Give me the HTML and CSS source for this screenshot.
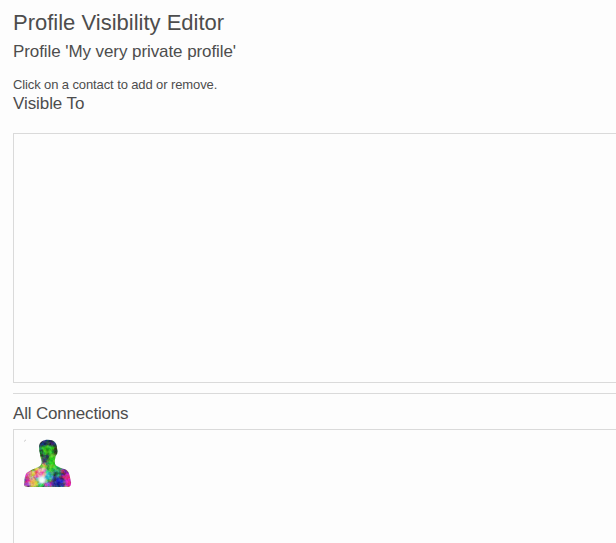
FILE: index.html
```html
<!DOCTYPE html>
<html lang="en">
<head>
<meta charset="utf-8">
<title>Profile Visibility Editor</title>
<link rel="stylesheet" href="styles.css">
</head>
<body>
<main class="editor">
  <h1 class="title">Profile Visibility Editor</h1>
  <h3 class="profile-name">Profile 'My very private profile'</h3>
  <p class="hint">Click on a contact to add or remove.</p>
  <h3 class="section-title">Visible To</h3>
  <div class="contacts visible-contacts"></div>
  <hr class="divider">
  <h3 class="section-title connections-title">All Connections</h3>
  <div class="contacts all-contacts">
    <svg class="avatar" viewBox="0 0 48 48" role="img" aria-label="Contact">
      <defs>
        <clipPath id="person"><path d="M15 8C15 3 19 .7 24 .7C30 .7 33 4 33 9L33.6 12Q33.8 15 31.8 17Q31 20 30.8 22Q30.6 25 32 26.5Q36 29 41 30.3Q44.5 31.5 45.5 36L47 43Q47.5 48 44 48H3Q-.5 48 .2 44Q.4 37 2.5 34Q6 31 12 29Q16.8 27 17.5 24.5Q18 22 17 20Q16 17 16 15Q15 12 15 8Z"/></clipPath>
        <filter id="soft" x="-20%" y="-20%" width="140%" height="140%"><feGaussianBlur stdDeviation="1.1"/></filter>
        <filter id="speckle" x="0" y="0" width="100%" height="100%" color-interpolation-filters="sRGB">
          <feTurbulence type="fractalNoise" baseFrequency=".27" numOctaves="3" seed="8"/>
          <feColorMatrix values="2.2 0 0 0 -.6  0 2.2 0 0 -.6  0 0 2.2 0 -.6  0 0 0 0 1"/>
        </filter>
      </defs>
      <g clip-path="url(#person)">
        <rect width="48" height="48" fill="#40a83c"/>
        <g filter="url(#soft)">
          <path fill="#293659" d="M13 0h21v7H13z"/>
          <path fill="#24603d" d="M14 7h7v10h-7z"/>
          <path fill="#32b423" d="M19 7h10v10H19z"/>
          <path fill="#253a28" d="M29 5h6v12h-6z"/>
          <path fill="#384b50" d="M18 16h7v10h-7z"/>
          <path fill="#42c823" d="M25 15h7v19h-7z"/>
          <path fill="#a6c365" d="M11 25h12v7H11z"/>
          <path fill="#dc3daa" d="M0 31h12v8H0z"/>
          <path fill="#d5a558" d="M5 32h7v6H5z"/>
          <path fill="#ed84a8" d="M12 30h9v9h-9z"/>
          <path fill="#bc42a0" d="M0 38h12v10H0z"/>
          <path fill="#e4c348" d="M6 40h7v8H6z"/>
          <circle fill="#eaffff" cx="18" cy="41" r="4"/>
          <path fill="#3bb7bd" d="M21 33h7v8h-7z"/>
          <path fill="#9b35b9" d="M20 43h8v5h-8z"/>
          <path fill="#2e8a63" d="M29 29h8v8h-8z"/>
          <path fill="#252b9b" d="M28 37h12v11H28z"/>
          <path fill="#83247b" d="M37 29h7v11h-7z"/>
          <path fill="#df229c" d="M41 34h7v14h-7z"/>
        </g>
        <rect class="speckles" width="48" height="48" filter="url(#speckle)"/>
      </g>
      <path class="fleck" d="M.4 2.2L1.6 1.2"/>
    </svg>
  </div>
</main>
</body>
</html>
```
FILE: styles.css
```css
html {
  overflow: hidden;
  background: #fdfdfd;
}

body {
  margin: 0;
  color: #4d4d4d;
  font: 13px/18px "Liberation Sans", Arial, sans-serif;
}

.editor {
  display: flow-root;
  padding-left: 13px;
}

.title,
.profile-name,
.section-title {
  margin: 0;
  font-weight: 400;
}

.title {
  margin-top: 11px;
  font-size: 22px;
  line-height: 24px;
}

.profile-name,
.section-title {
  font-size: 17px;
  line-height: 19px;
  letter-spacing: -0.08px;
}

.profile-name {
  margin-top: 7px;
}

.connections-title {
  letter-spacing: -0.18px;
}

.hint {
  margin: 15px 0 0;
  letter-spacing: -0.11px;
}

.contacts {
  box-sizing: border-box;
  height: 250px;
  padding: 9px 10px;
  border: 1px solid #dadada;
  border-right: 0;
}

.visible-contacts {
  margin-top: 20px;
}

.divider {
  height: 1px;
  margin: 10px 0;
  border: 0;
  background: #dadada;
}

.all-contacts {
  height: 130px;
  margin-top: 6px;
}

.avatar {
  display: block;
  width: 48px;
  height: 48px;
}

.speckles {
  mix-blend-mode: overlay;
  opacity: .55;
}

.fleck {
  stroke: #aaa;
  stroke-width: 1;
}
```
